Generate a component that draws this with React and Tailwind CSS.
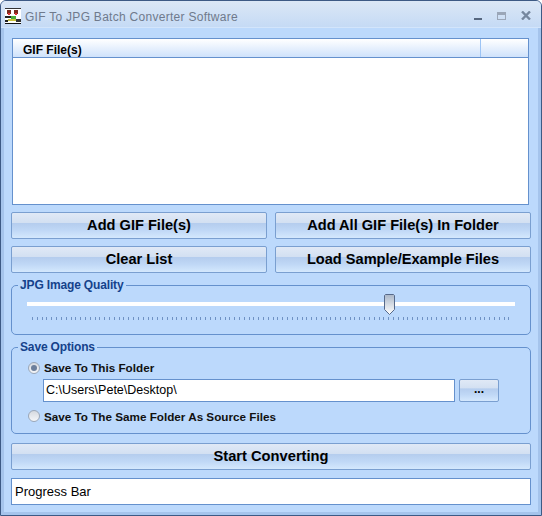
import React from 'react';

function Button({ children, className = '' }) {
  return (
    <button className={`rounded-[2px] border border-[#7a9fd0] bg-[linear-gradient(to_bottom,#e0e9f6_0%,#d3e0f2_38%,#b5cdee_42%,#c0d8f6_70%,#d4e8fd_100%)] font-bold text-black ${className}`}>
      {children}
    </button>
  );
}

function Group({ title, className = '', children }) {
  return (
    <fieldset className={`rounded-[5px] border border-[#6591cd] ${className}`}>
      <legend className="ml-[6px] px-[2px] text-[12px] leading-[14px] font-bold tracking-[-0.15px] text-[#15428b]">{title}</legend>
      {children}
    </fieldset>
  );
}

function Radio({ checked, label }) {
  return (
    <label className="flex items-center gap-[4px] text-[11.7px] font-bold text-[#111]">
      <span className="flex h-[12px] w-[12px] items-center justify-center rounded-full border border-[#9aa7b8] bg-[linear-gradient(to_bottom,#d5d9df,#f4f6f9)]">
        {checked && <span className="h-[6px] w-[6px] rounded-full bg-[#6c7f9c]" />}
      </span>
      {label}
    </label>
  );
}

function AppIcon() {
  return (
    <svg width="16" height="16" viewBox="0 0 16 16" shapeRendering="crispEdges">
      <rect x="0" y="0" width="16" height="16" fill="#fff" />
      <rect x="0" y="0" width="16" height="1" fill="#333" />
      <rect x="0" y="15" width="16" height="1" fill="#111" />
      <rect x="2" y="2" width="4" height="4" fill="#7b2b1f" />
      <rect x="9" y="2" width="4" height="4" fill="#7b2b1f" />
      <rect x="3" y="5" width="2" height="2" fill="#d33" />
      <rect x="10" y="5" width="2" height="2" fill="#d33" />
      <rect x="0" y="8" width="8" height="2" fill="#222" />
      <rect x="6" y="8" width="5" height="3" fill="#4caf3a" />
      <rect x="3" y="11" width="8" height="2" fill="#c7c23a" />
      <rect x="0" y="12" width="3" height="2" fill="#222" />
      <rect x="11" y="11" width="5" height="3" fill="#333" />
    </svg>
  );
}

export default function App() {
  const ticks = Array.from({ length: 100 });

  return (
    <div className="flex h-[516px] w-[542px] flex-col overflow-hidden rounded-t-[6px] border border-[#3d5a85] bg-[#bcd9fc] font-['Liberation_Sans',Arial,sans-serif]">
      {/* title bar */}
      <div className="flex h-[27px] shrink-0 items-center border-b border-[#d3e5fb] bg-[linear-gradient(to_bottom,#dbe7f6,#c5daf5)] pt-[3px] pl-[4px]">
        <AppIcon />
        <span className="mt-[2px] ml-[4px] text-[12px] tracking-[0.28px] text-[#6f7a8c]">GIF To JPG Batch Converter Software</span>
        <div className="ml-auto flex items-center gap-[15px] pr-[10px]">
          <span className="mt-[7px] h-[2px] w-[8px] bg-[#56677f]" />
          <span className="mt-[1px] h-[8px] w-[9px] border border-[#9aa6b8] border-t-[3px]" />
          <svg width="10" height="9" viewBox="0 0 10 9"><path d="M1 0.5 L9 8.5 M9 0.5 L1 8.5" stroke="#76889f" strokeWidth="2.4" /></svg>
        </div>
      </div>

      <div className="flex flex-1 flex-col border-x-[3px] border-b-[3px] border-[#a5c4ec] px-[7px] pt-[10px]">
        {/* list */}
        <div className="ml-[1px] h-[167px] w-[517px] shrink-0 border border-[#6591cd] bg-white">
          <div className="flex h-[19px] border-b border-[#6591cd] bg-[linear-gradient(to_bottom,#ffffff,#cfe2fb)] text-[12px] font-bold text-black">
            <div className="w-[468px] border-r border-[#9cc4f5] pt-[4px] pl-[10px] leading-[14px]">GIF File(s)</div>
          </div>
        </div>

        {/* action buttons */}
        <div className="mt-[7px] grid grid-cols-2 gap-x-[8px] gap-y-[7px] text-[14.6px]">
          <Button className="h-[27px]">Add GIF File(s)</Button>
          <Button className="h-[27px]">Add All GIF File(s) In Folder</Button>
          <Button className="h-[27px]">Clear List</Button>
          <Button className="h-[27px]">Load Sample/Example Files</Button>
        </div>

        {/* quality */}
        <Group title="JPG Image Quality" className="mt-[5px] h-[57px] shrink-0">
          <div className="relative mx-[15px] mt-[10px] h-[4px] w-[488px] bg-white">
            <svg className="absolute top-[-8px] left-[357px]" width="11" height="21" viewBox="0 0 11 21">
              <defs>
                <linearGradient id="thumb" x1="0" y1="0" x2="0" y2="1">
                  <stop offset="0" stopColor="#a9b6c8" />
                  <stop offset="0.6" stopColor="#dfe4ea" />
                  <stop offset="1" stopColor="#fff" />
                </linearGradient>
              </defs>
              <path d="M1.5 .5 H9.5 L10.5 1.5 V15.5 L5.5 20.5 L.5 15.5 V1.5 Z" fill="url(#thumb)" stroke="#56698a" />
            </svg>
          </div>
          <div className="mx-[20px] mt-[11px] flex h-[3px] w-[478px] justify-between">
            {ticks.map((_, i) => (
              <span key={i} className="h-[3px] w-px bg-[#6f92c4]" />
            ))}
          </div>
        </Group>

        {/* save options */}
        <Group title="Save Options" className="mt-[5px] h-[94px] shrink-0">
          <div className="mt-[5px] ml-[16px]">
            <Radio checked label="Save To This Folder" />
          </div>
          <div className="mt-[2px] ml-[31px] flex gap-[4px]">
            <input
              readOnly
              value="C:\Users\Pete\Desktop\"
              className="h-[23px] w-[412px] border border-[#6591cd] bg-white px-[2px] text-[12.5px] font-normal text-black outline-none"
            />
            <Button className="h-[23px] w-[40px] pb-[2px] text-[12px] leading-none">...</Button>
          </div>
          <div className="mt-[6px] ml-[16px]">
            <Radio label="Save To The Same Folder As Source Files" />
          </div>
        </Group>

        <Button className="mt-[9px] h-[27px] shrink-0 text-[14.7px]">Start Converting</Button>

        <div className="mt-[8px] flex h-[27px] shrink-0 items-center border border-[#6591cd] bg-white pl-[3px] text-[13px] text-black">Progress Bar</div>
      </div>
    </div>
  );
}
